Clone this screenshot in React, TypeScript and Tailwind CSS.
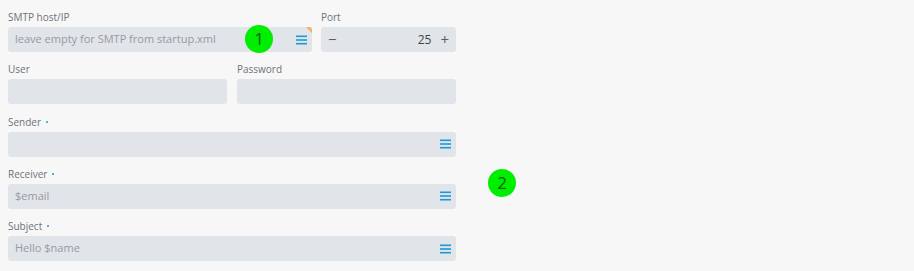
import React from 'react'

const font = { fontFamily: '"Open Sans", "Noto Sans", sans-serif' }

function MenuIcon() {
  return (
    <svg width="11" height="10" viewBox="0 0 11 10" className="shrink-0">
      <rect x="0" y="0.5" width="11" height="1.6" fill="#1b9ad3" />
      <rect x="0" y="4.2" width="11" height="1.6" fill="#1b9ad3" />
      <rect x="0" y="7.9" width="11" height="1.6" fill="#1b9ad3" />
    </svg>
  )
}

function Label({ text, required }: { text: string; required?: boolean }) {
  return (
    <div className="h-4 leading-4 text-[10px] text-[#6e7279] mb-[2px] flex items-center">
      <span>{text}</span>
      {required && <span className="ml-[5px] w-[2px] h-[2px] rounded-full bg-[#1b9ad3]" />}
    </div>
  )
}

function Field({
  label,
  required,
  placeholder,
  menu,
  corner,
}: {
  label: string
  required?: boolean
  placeholder?: string
  menu?: boolean
  corner?: boolean
}) {
  return (
    <div className="flex flex-col">
      <Label text={label} required={required} />
      <div className="relative h-[25px] rounded-[3px] bg-[#e1e4e8] flex items-center pl-[7px] pr-[5px] overflow-hidden">
        <span className="flex-1 text-[11px] text-[#969ba3] truncate">{placeholder}</span>
        {menu && <MenuIcon />}
        {corner && (
          <div className="absolute top-0 right-0 w-0 h-0 border-t-[6px] border-l-[6px] border-t-[#f2b462] border-l-transparent" />
        )}
      </div>
    </div>
  )
}

function Badge({ n }: { n: string }) {
  return (
    <div className="w-[28px] h-[28px] rounded-full bg-[#00ee00] flex items-center justify-center text-[17px] text-[#145c14]">
      {n}
    </div>
  )
}

export default function App() {
  return (
    <div className="relative w-[914px] h-[271px] bg-[#f7f7f7] pl-2 pt-[9px] overflow-hidden" style={font}>
      <div className="w-[448px] flex flex-col gap-[9.3px]">
        <div className="grid grid-cols-[304px_135px] gap-[9px]">
          <Field label="SMTP host/IP" placeholder="leave empty for SMTP from startup.xml" menu corner />
          <div className="flex flex-col">
            <Label text="Port" />
            <div className="h-[25px] rounded-[3px] bg-[#e1e4e8] flex items-center px-[7px] text-[#5a5f66]">
              <span className="text-[15px] leading-none w-[10px]">−</span>
              <span className="flex-1 text-right text-[12px] text-[#3f4349] pr-[9px]">25</span>
              <span className="text-[15px] leading-none">+</span>
            </div>
          </div>
        </div>
        <div className="grid grid-cols-2 gap-[10px]">
          <Field label="User" />
          <Field label="Password" />
        </div>
        <Field label="Sender" required menu />
        <Field label="Receiver" required placeholder="$email" menu />
        <Field label="Subject" required placeholder="Hello $name" menu />
      </div>
      <div className="absolute left-[245px] top-[25px]">
        <Badge n="1" />
      </div>
      <div className="absolute left-[488px] top-[169px]">
        <Badge n="2" />
      </div>
    </div>
  )
}
